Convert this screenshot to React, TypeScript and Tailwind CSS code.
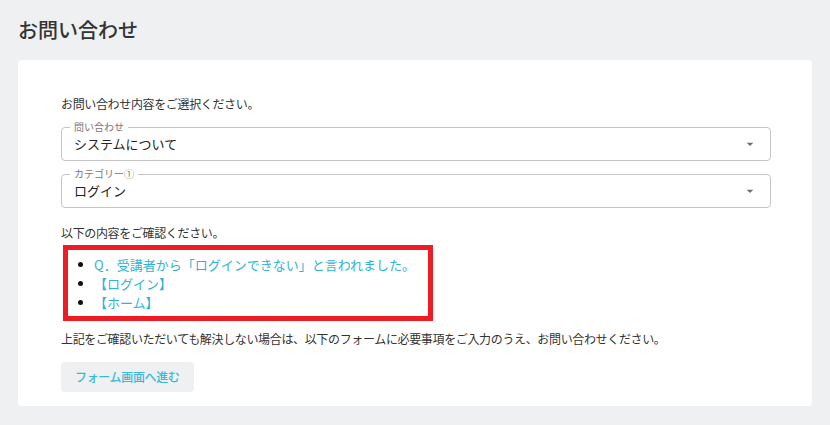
import React from 'react';

const FONT = { fontFamily: '"Noto Sans CJK JP", "Noto Sans", sans-serif' };

const Caret: React.FC = () => (
  <svg viewBox="0 0 24 24" className="w-[16px] h-[16px] fill-[#6f6f6f]">
    <path d="M7 10l5 5 5-5z" />
  </svg>
);

interface SelectBoxProps {
  label: string;
  value: string;
  className?: string;
}

const SelectBox: React.FC<SelectBoxProps> = ({ label, value, className }) => (
  <div className={`relative h-[34px] rounded border border-[#c4c4c4] flex items-center pl-[12px] pr-[12px] ${className ?? ''}`}>
    <span className="absolute -top-[7px] left-[8px] bg-white px-[4px] text-[10px] leading-[12px] text-[#777]">{label}</span>
    <span className="flex-1 text-[13px] leading-[20px] text-[#222]">{value}</span>
    <Caret />
  </div>
);

const links = ['Q．受講者から「ログインできない」と言われました。', '【ログイン】', '【ホーム】'];

export default function App() {
  return (
    <div className="min-h-[425px] bg-[#eef0f2] px-[18px] pt-[15px] pb-[20px]" style={FONT}>
      <h1 className="text-[20px] leading-[30px] font-medium text-[#333]">お問い合わせ</h1>
      <div className="mt-[15px] bg-white rounded pl-[43px] pr-[41px] pt-[35px] pb-[14px] text-[12px] leading-[18px] tracking-[-0.35px] text-[#333]">
        <p>お問い合わせ内容をご選択ください。</p>
        <SelectBox label="問い合わせ" value="システムについて" className="mt-[14px] tracking-normal" />
        <SelectBox label="カテゴリー①" value="ログイン" className="mt-[13px] tracking-normal" />
        <p className="mt-[16px]">以下の内容をご確認ください。</p>
        <div className="mt-[3px] ml-[2px] w-[370px] border-[5px] border-[#ee1c25] pt-[5px] pb-[4px] tracking-normal">
          <ul className="flex flex-col">
            {links.map((t) => (
              <li key={t} className="flex items-center h-[19px] text-[13px] leading-[19px]">
                <span className="ml-[10px] w-[5px] h-[5px] rounded-full bg-[#111]" />
                <a className="ml-[11px] text-[#2fb3d3] cursor-pointer">{t}</a>
              </li>
            ))}
          </ul>
        </div>
        <p className="mt-[9px]">上記をご確認いただいても解決しない場合は、以下のフォームに必要事項をご入力のうえ、お問い合わせください。</p>
        <button className="mt-[14px] h-[30px] px-[14px] rounded bg-[#eef0f2] text-[12px] font-medium text-[#3bb8d6]">
          フォーム画面へ進む
        </button>
      </div>
    </div>
  );
}
